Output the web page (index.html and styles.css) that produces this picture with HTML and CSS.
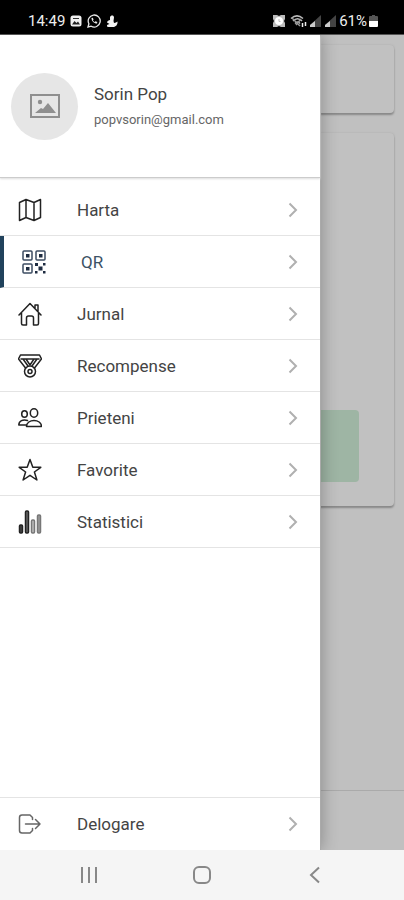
FILE: index.html
```html
<!DOCTYPE html>
<html lang="ro">
<head>
<meta charset="utf-8">
<meta name="viewport" content="width=device-width, initial-scale=1">
<title>Meniu</title>
<link rel="stylesheet" href="styles.css">
</head>
<body>
<header class="status">
  <div class="status-group">
    <span class="clock">14:49</span>
    <svg width="12" height="12" viewBox="0 0 12 12"><rect x=".5" y=".5" width="11" height="11" rx="2.500" fill="#f2f2f2"/><path d="M2 9.500 4.500 6l2 2L8 6.500l2 3z" fill="#222"/><path d="M3 3.500h6" stroke="#333"/></svg>
    <svg width="14" height="14" viewBox="0 0 14 14" fill="none" stroke="#e8e8e8" stroke-width="1.300"><path d="M1 13l.9-3.200A6 6 0 1 1 4.200 12.200z"/><path d="M4.500 4c0 3 2.500 5.500 5.500 5.500l.3-1.500-1.800-.8-.8.8C6.700 7.500 6.200 7 5.900 6.200l.7-.8-.8-1.700z" fill="#e8e8e8" stroke="none"/></svg>
    <svg width="12" height="14" viewBox="0 0 12 14" fill="#f2f2f2"><path d="M4 3c.5-2 4-2.500 4 .5L7.500 7l.5 2c1.500 0 2.500-.8 3.500-1.500C11.800 10.500 10 13 7 13H2.500C.5 13 .5 11 2 10.500l1.500-.5L1 8.500C1 7 3 6 4 6z"/></svg>
  </div>
  <div class="status-group status-right">
    <svg width="12" height="12" viewBox="0 0 12 12"><path d="M0 0h4l2 1 2-1h4v4l-1 2 1 2v4H8l-2-1-2 1H0V8l1-2-1-2z" fill="#bbb"/><circle cx="6" cy="6" r="4" fill="#fff"/><path d="M6 4v2.500h1.500" fill="none" stroke="#bbb"/></svg>
    <svg class="wifi" width="17" height="13" viewBox="0 0 17 13" fill="none" stroke="#bbb" stroke-width="1.500"><path d="M1 3.500c4-3.500 8-3.500 12 0M3 6c3-3 6-3 9 0M5 8.500c2-2 3.500-2 5 0"/><path d="M2 3l8 8M6 10l5-6" stroke="#999"/><path d="M12.500 8v4M15.500 7v4" stroke="#eee"/></svg>
    <svg width="13" height="12" viewBox="0 0 13 12"><path d="M1 12V10l11-10v12z" fill="#444"/><path d="M1 12v-2l5-4v6z" fill="#ccc"/></svg>
    <svg width="13" height="12" viewBox="0 0 13 12"><path d="M1 12V10l11-10v12z" fill="#444"/><path d="M1 12v-2l5-4v6z" fill="#ccc"/></svg>
    <span class="battery">61%</span>
    <svg width="9" height="12" viewBox="0 0 9 12"><path d="M3 0h3v1h2q1 0 1 1v4H0V2q0-1 1-1h2z" fill="#555"/><path d="M0 6h9v5q0 1-1 1H1q-1 0-1-1z" fill="#fff"/></svg>
  </div>
</header>

<div class="screen">
  <div class="page" aria-hidden="true">
    <div class="card card-top"></div>
    <div class="card card-main"><div class="tile"></div></div>
    <div class="tabs"></div>
  </div>

  <aside class="drawer">
    <div class="profile">
      <div class="avatar">
        <svg width="30" height="24" viewBox="0 0 30 24"><rect x="1" y="1" width="28" height="22" fill="none" stroke="#8f8f8f" stroke-width="2"/><circle cx="10" cy="8" r="2.200" fill="#8f8f8f"/><path d="M5 19l6-5 2 1 5-6 8 10z" fill="#8f8f8f"/></svg>
      </div>
      <div class="who">
        <div class="name">Sorin Pop</div>
        <div class="email">popvsorin@gmail.com</div>
      </div>
    </div>

    <nav class="menu">
      <a class="item" href="#harta">
        <svg class="icon" viewBox="0 0 24 24"><path d="M1.500 4.500 8 1.500l8 3 6.500-3v18L16 22.500l-8-3-6.500 3zM8 1.500v18M16 4.500v18"/></svg>
        <span class="label">Harta</span>
        <svg class="chevron" viewBox="0 0 10 16"><path d="M1.500 1.500 8 8l-6.500 6.500"/></svg>
      </a>
      <a class="item active" href="#qr" aria-current="page">
        <svg class="icon" viewBox="0 0 24 24"><rect x="1" y="1" width="9" height="9" rx="1"/><rect x="14" y="1" width="9" height="9" rx="1"/><rect x="1" y="14" width="9" height="9" rx="1"/><path class="solid" d="M4 4h3.500v3.500H4zM17 4h3.500v3.500H17zM4 17h3.500v3.500H4zM13 13h3v3h-3zM16.500 16.500h4v4h-4zM21 13h2.500v2.500H21zM13 21h2.500v2.500H13zM21 21h2.500v2.500H21z"/></svg>
        <span class="label">QR</span>
        <svg class="chevron" viewBox="0 0 10 16"><path d="M1.500 1.500 8 8l-6.500 6.500"/></svg>
      </a>
      <a class="item" href="#jurnal">
        <svg class="icon" viewBox="0 0 24 24"><path d="M1 13 12 1.500 23 13M17 6V3h3v6M3.500 11v10.500Q3.500 23 5 23h3.500v-7q0-2 2-2h3q2 0 2 2v7H19q1.500 0 1.500-1.500V11"/></svg>
        <span class="label">Jurnal</span>
        <svg class="chevron" viewBox="0 0 10 16"><path d="M1.500 1.500 8 8l-6.500 6.500"/></svg>
      </a>
      <a class="item" href="#recompense">
        <svg class="icon" viewBox="0 0 24 24"><path d="M2.500 1h19l2 4-7 9M2.500 1l-2 4 7 9M3 5h18M5 5l5 7M19 5l-5 7M8 5l4 6 4-6"/><circle cx="12" cy="17.500" r="5.500"/><circle cx="12" cy="17.500" r="2"/></svg>
        <span class="label">Recompense</span>
        <svg class="chevron" viewBox="0 0 10 16"><path d="M1.500 1.500 8 8l-6.500 6.500"/></svg>
      </a>
      <a class="item" href="#prieteni">
        <svg class="icon" viewBox="0 0 24 24"><ellipse cx="16" cy="7" rx="3.700" ry="4.200"/><path d="M8.500 20.500c0-8 15-8 15 0z"/><ellipse cx="6.500" cy="8" rx="2.800" ry="3.300"/><path d="M9.500 14.500C5 13 .8 15 .8 19h7"/></svg>
        <span class="label">Prieteni</span>
        <svg class="chevron" viewBox="0 0 10 16"><path d="M1.500 1.500 8 8l-6.500 6.500"/></svg>
      </a>
      <a class="item" href="#favorite">
        <svg class="icon" viewBox="0 0 24 24"><path d="M12 1.500l2.800 7.800h8L16.400 14l2.500 8L12 17.300 5.100 22l2.500-8L1.200 9.300h8z"/></svg>
        <span class="label">Favorite</span>
        <svg class="chevron" viewBox="0 0 10 16"><path d="M1.500 1.500 8 8l-6.500 6.500"/></svg>
      </a>
      <a class="item" href="#statistici">
        <svg class="icon" viewBox="0 0 24 24"><rect x="1.500" y="15" width="3" height="8" rx="1" fill="#444"/><rect x="7.500" y="1" width="3" height="22" rx="1" fill="#666"/><rect x="13.500" y="10" width="3" height="13" rx="1" fill="#bbb" stroke="#777"/><rect x="19.500" y="5" width="3" height="18" rx="1" fill="#999" stroke="#777"/></svg>
        <span class="label">Statistici</span>
        <svg class="chevron" viewBox="0 0 10 16"><path d="M1.500 1.500 8 8l-6.500 6.500"/></svg>
      </a>
    </nav>

    <div class="logout">
      <a class="item" href="#delogare">
        <svg class="icon thin" viewBox="0 0 24 24"><path d="M14.500 7.500V5.500L12 3H4Q1.500 3 1.500 5.500v13Q1.500 21 4 21h8l2.500-2.500v-2M7.500 12h14.500M17.500 7.500 22 12l-4.500 4.500"/></svg>
        <span class="label">Delogare</span>
        <svg class="chevron" viewBox="0 0 10 16"><path d="M1.500 1.500 8 8l-6.500 6.500"/></svg>
      </a>
    </div>
  </aside>
</div>

<footer class="sysnav">
  <button type="button" aria-label="Recente"><svg width="20" height="20" viewBox="0 0 20 20"><path d="M3 2v16M10 2v16M17 2v16"/></svg></button>
  <button type="button" aria-label="Acasă"><svg width="20" height="20" viewBox="0 0 20 20"><rect x="2" y="2" width="16" height="16" rx="5"/></svg></button>
  <button type="button" aria-label="Înapoi"><svg width="20" height="20" viewBox="0 0 20 20"><path d="M14 2.500 6 10l8 7.500"/></svg></button>
</footer>
</body>
</html>
```
FILE: styles.css
```css
* {
  box-sizing: border-box;
}

body {
  margin: 0;
  min-height: 100vh;
  display: flex;
  flex-direction: column;
  font-family: Roboto, "Liberation Sans", sans-serif;
  color: #333;
  background: #c0c0c0;
}

/* Status bar */
.status {
  height: 35px;
  padding: 8px 26px 0 28px;
  display: flex;
  align-items: center;
  justify-content: space-between;
  background: #000;
  border-bottom: 1px solid #555;
  color: #eee;
  font-size: 15px;
  line-height: 20px;
}

.status-group {
  display: flex;
  align-items: center;
  gap: 5px;
}

.status-right {
  gap: 2px;
}

.wifi {
  margin-left: 3px;
}

/* Dimmed page under the drawer */
.screen {
  flex: 1;
  position: relative;
  display: flex;
  overflow: hidden;
}

.page {
  flex: 1;
  display: flex;
  flex-direction: column;
  padding-top: 10px;
  background: #c0c0c0;
}

.card {
  margin: 0 10px 20px;
  border-radius: 4px;
  background: #c1c1c1;
  box-shadow: 0 2px 2px #888, 0 0 2px #aaa;
}

.card-top {
  height: 68px;
}

.card-main {
  height: 373px;
  padding: 24px 35px;
  display: flex;
  align-items: flex-end;
}

.tile {
  flex: 1;
  height: 72px;
  border-radius: 4px;
  background: #9eb5a4;
}

.tabs {
  height: 60px;
  margin-top: auto;
  border-top: 1px solid #aaa;
}

/* Drawer */
.drawer {
  position: absolute;
  top: 0;
  bottom: 0;
  left: 0;
  width: 321px;
  max-width: 85%;
  display: flex;
  flex-direction: column;
  background: #fff;
  border-right: 1px solid #aaa;
  box-shadow: 0 0 16px rgba(0, 0, 0, 0.3);
}

.profile {
  height: 143px;
  padding: 0 11px;
  display: flex;
  align-items: center;
  gap: 16px;
  border-bottom: 1px solid #ccc;
  box-shadow: 0 1px 2px #ddd;
}

.avatar {
  width: 67px;
  height: 67px;
  border-radius: 50%;
  display: flex;
  align-items: center;
  justify-content: center;
  background: #e6e6e6;
}

.name {
  font-size: 17px;
  line-height: 28px;
  color: #444;
}

.email {
  font-size: 13px;
  line-height: 24px;
  color: #666;
}

.menu {
  padding-top: 6px;
}

.item {
  height: 52px;
  padding: 0 22px 0 18px;
  display: flex;
  align-items: center;
  border-bottom: 1px solid #e4e4e4;
  color: #444;
  font-size: 17px;
  line-height: 24px;
  text-decoration: none;
}

.item.active {
  border-left: 4px solid #21425c;
  color: #3c5266;
}

.icon {
  width: 24px;
  height: 24px;
  margin-right: 35px;
  fill: none;
  stroke: #222;
  stroke-width: 1.5;
  stroke-linejoin: round;
  stroke-linecap: round;
}

.active .icon {
  stroke: #3c4c62;
}

.icon .solid {
  fill: #1d2b40;
  stroke: none;
}

.icon.thin {
  stroke: #666;
}

.label {
  flex: 1;
}

.chevron {
  width: 10px;
  height: 16px;
  fill: none;
  stroke: #b0b0b0;
  stroke-width: 2;
}

.logout {
  margin-top: auto;
  border-top: 1px solid #e4e4e4;
}

.logout .item {
  border-bottom: 0;
}

/* System navigation */
.sysnav {
  height: 50px;
  padding: 0 32px;
  display: flex;
  align-items: center;
  background: #f5f5f5;
}

.sysnav button {
  flex: 1;
  height: 40px;
  padding: 0;
  display: flex;
  align-items: center;
  justify-content: center;
  border: 0;
  background: none;
}

.sysnav svg {
  fill: none;
  stroke: #888;
  stroke-width: 2;
}
```
